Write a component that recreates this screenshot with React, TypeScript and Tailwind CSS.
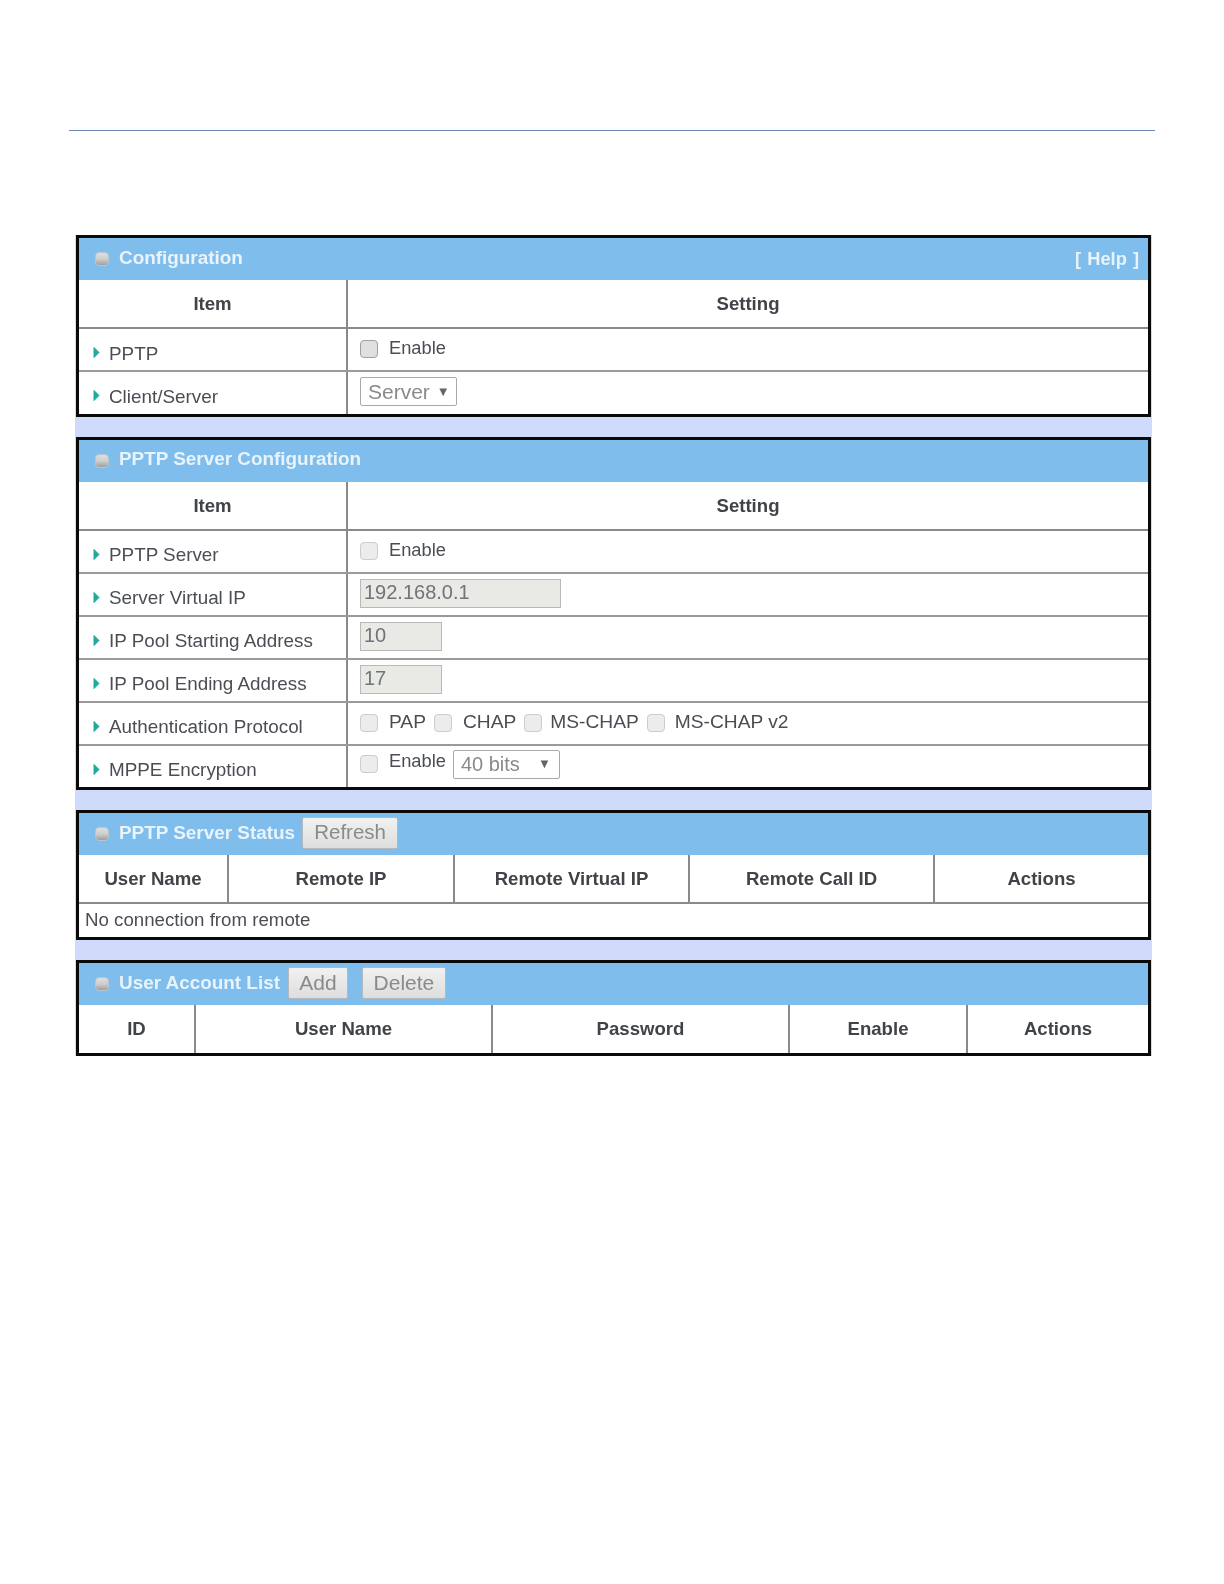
import React from "react";

const font = "font-['Liberation_Sans',Arial,sans-serif]";

function Arrow() {
  return (
    <svg width="7" height="13" viewBox="0 0 7 13" className="absolute left-[14px] top-[17px]">
      <path d="M1 1.5 L6 6.5 L1 11.5 Z" fill="#1fa99b" stroke="#1fa99b" strokeWidth="1" strokeLinejoin="round" />
    </svg>
  );
}

function Check({ dark, className = "" }: { dark?: boolean; className?: string }) {
  return (
    <span
      className={
        "inline-block w-[18px] h-[18px] rounded-[4px] border shrink-0 " +
        (dark ? "bg-[#e0e0e0] border-[#a0a0a0] " : "bg-[#ececec] border-[#cdcdcd] ") +
        className
      }
    />
  );
}

function Bullet() {
  return (
    <span className="w-[14px] h-[14px] rounded-[4px] mr-[10px] shrink-0 border border-[#bcc4cc] bg-gradient-to-b from-[#dedede] via-[#cfcfcf] to-[#9f9f9f]" />
  );
}

function Header({ title, children, className = "" }: { title: string; children?: React.ReactNode; className?: string }) {
  return (
    <div className="h-[42px] bg-[#7fbdec] flex items-center pl-[16px] pr-[9px]">
      <Bullet />
      <span className={"text-[18.9px] font-bold text-[#e8f3fb] whitespace-nowrap " + (className || "mt-[-2px]")}>{title}</span>
      {children}
    </div>
  );
}

function Btn({ children, className = "" }: { children: React.ReactNode; className?: string }) {
  return (
    <span className={"h-[32px] mt-[-3px] flex items-center justify-center rounded-[2px] border border-[#b4b9bd] bg-gradient-to-b from-[#f1f1f1] to-[#dedede] text-[#8a8a8a] " + className}>
      {children}
    </span>
  );
}

function HeadRow({ cols, last }: { cols: [string, string][]; last?: boolean }) {
  return (
    <div className={"flex " + (last ? "h-[48px]" : "h-[49px] border-b-2 border-[#8a8a8a]")}>
      {cols.map(([t, w], i) => (
        <div
          key={t}
          className={"flex items-center justify-center font-bold text-[18.6px] text-[#404448] " + w + (i < cols.length - 1 ? " border-r-2 border-[#8a8a8a]" : "")}
        >
          {t}
        </div>
      ))}
    </div>
  );
}

function Row({ label, children, last, low, tall }: { label: string; children: React.ReactNode; last?: boolean; low?: boolean; tall?: boolean }) {
  return (
    <div className={"flex " + (tall ? "h-[42px]" : last ? "h-[41px]" : "h-[43px] border-b-2 border-[#9a9a9a]")}>
      <div className={"relative w-[269px] shrink-0 border-r-2 border-[#8a8a8a] pl-[30px] text-[18.85px] leading-[26px] text-[#4a4e54] " + (low ? "pt-[12px]" : "pt-[11px]")}>
        <Arrow />
        {label}
      </div>
      <div className="flex-1 flex items-center pl-[12px] text-[19.2px] text-[#4a4e54]">{children}</div>
    </div>
  );
}

function Panel({ children }: { children: React.ReactNode }) {
  return <div className="ml-[1px] mr-[1px] border-[3px] border-[#0a0a0a] bg-white">{children}</div>;
}

function Field({ value, w }: { value: string; w: string }) {
  return (
    <div className={"h-[29px] mt-[-2px] bg-[#e9e9e6] border border-[#b9b9b9] pl-[3px] text-[20px] leading-[25px] text-[#6f7478] " + w}>{value}</div>
  );
}

function Select({ value, w, gap, className = "" }: { value: string; w: string; gap: string; className?: string }) {
  return (
    <div className={"h-[29px] bg-white border border-[#aaaaaa] rounded-[2px] flex items-center pl-[7px] text-[#8a8a8a] " + w + " " + className}>
      <span>{value}</span>
      <span className={"text-[13px] text-[#666] " + gap}>▼</span>
    </div>
  );
}

export default function App() {
  const cfgHead: [string, string][] = [
    ["Item", "w-[269px] shrink-0"],
    ["Setting", "flex-1"],
  ];
  return (
    <div className={"w-[1224px] h-[1584px] bg-white pt-[130px] blur-[0.3px] " + font}>
      <div className="ml-[69px] w-[1086px] h-px bg-[#6f88b4]" />
      <div className="mt-[104px] ml-[75px] w-[1077px] bg-[#d0dbfb]">
        <Panel>
          <Header title="Configuration">
            <span className="ml-auto text-[18.3px] font-bold text-[#e8f3fb] [word-spacing:1px]">[ Help ]</span>
          </Header>
          <HeadRow cols={cfgHead} />
          <Row label="PPTP" low>
            <Check dark className="mt-[-2px]" />
            <span className="ml-[11px] mt-[-3px] text-[18.3px]">Enable</span>
          </Row>
          <Row label="Client/Server" low tall>
            <Select value="Server" w="w-[97px]" gap="ml-[7px]" className="mt-[-3px] text-[21px]" />
          </Row>
        </Panel>
        <div className="h-[20px]" />
        <Panel>
          <Header title="PPTP Server Configuration" className="mt-[-4px]" />
          <HeadRow cols={cfgHead} />
          <Row label="PPTP Server">
            <Check className="mt-[-2px]" />
            <span className="ml-[11px] mt-[-3px] text-[18.3px]">Enable</span>
          </Row>
          <Row label="Server Virtual IP">
            <Field value="192.168.0.1" w="w-[201px]" />
          </Row>
          <Row label="IP Pool Starting Address">
            <Field value="10" w="w-[82px]" />
          </Row>
          <Row label="IP Pool Ending Address">
            <Field value="17" w="w-[82px]" />
          </Row>
          <Row label="Authentication Protocol">
            <Check className="mt-[-2px]" />
            <span className="ml-[11px] mt-[-3px]">PAP</span>
            <Check className="ml-[8px] mt-[-2px]" />
            <span className="ml-[11px] mt-[-3px]">CHAP</span>
            <Check className="ml-[8px] mt-[-2px]" />
            <span className="ml-[8px] mt-[-3px]">MS-CHAP</span>
            <Check className="ml-[8px] mt-[-2px]" />
            <span className="ml-[10px] mt-[-3px]">MS-CHAP v2</span>
          </Row>
          <Row label="MPPE Encryption" last>
            <Check className="mt-[-6px]" />
            <span className="ml-[11px] mt-[-11px] text-[18.3px]">Enable</span>
            <Select value="40 bits" w="w-[107px]" gap="ml-[18px]" className="ml-[7px] mt-[-5px] text-[20px]" />
          </Row>
        </Panel>
        <div className="h-[20px]" />
        <Panel>
          <Header title="PPTP Server Status">
            <Btn className="ml-[7px] w-[96px] text-[20.5px]">Refresh</Btn>
          </Header>
          <HeadRow
            cols={[
              ["User Name", "w-[150px] shrink-0"],
              ["Remote IP", "w-[226px] shrink-0"],
              ["Remote Virtual IP", "w-[235px] shrink-0"],
              ["Remote Call ID", "w-[245px] shrink-0"],
              ["Actions", "flex-1"],
            ]}
          />
          <div className="h-[33px] pl-[6px] flex items-center text-[18.7px] text-[#4a4e54]">No connection from remote</div>
        </Panel>
        <div className="h-[20px]" />
        <Panel>
          <Header title="User Account List">
            <Btn className="ml-[8px] w-[60px] text-[21px]">Add</Btn>
            <Btn className="ml-[14px] w-[84px] text-[21px]">Delete</Btn>
          </Header>
          <HeadRow
            last
            cols={[
              ["ID", "w-[117px] shrink-0"],
              ["User Name", "w-[297px] shrink-0"],
              ["Password", "w-[297px] shrink-0"],
              ["Enable", "w-[178px] shrink-0"],
              ["Actions", "flex-1"],
            ]}
          />
        </Panel>
      </div>
    </div>
  );
}
